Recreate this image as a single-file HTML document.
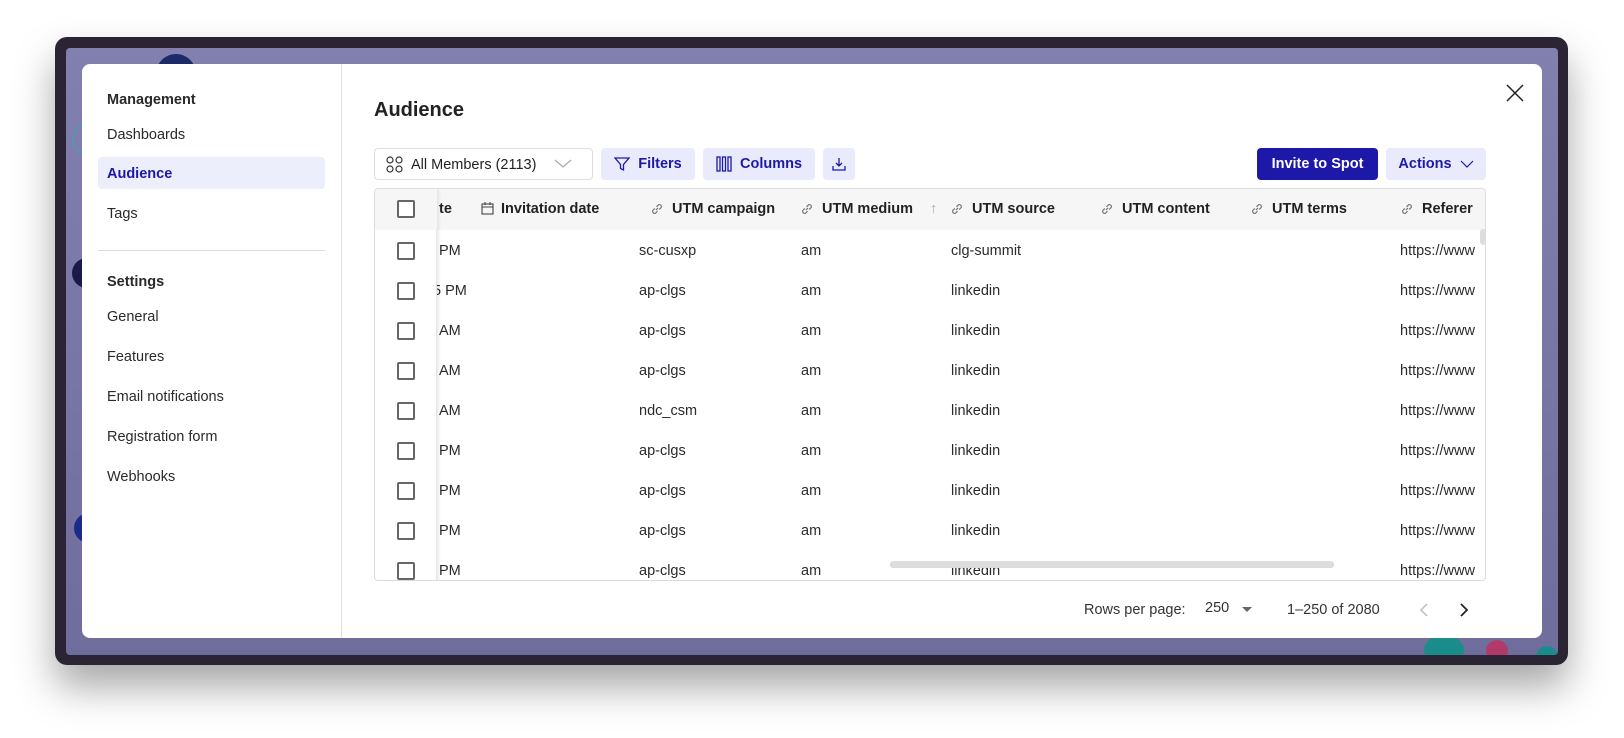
<!DOCTYPE html>
<html><head><meta charset="utf-8"><style>
*{box-sizing:border-box;margin:0;padding:0}
body{width:1624px;height:738px;background:#fff;position:relative;overflow:hidden;font-family:"Liberation Sans",sans-serif;color:#222;font-size:14.5px}
.frame{position:absolute;left:55px;top:37px;width:1513px;height:628px;background:#2b2433;border-radius:12px;box-shadow:0 22px 40px rgba(0,0,0,.35)}
.inner{position:absolute;left:66px;top:48px;width:1492px;height:607px;background:linear-gradient(#8180ae,#6f6d9c);border-radius:4px;overflow:hidden}
.modal{position:absolute;left:82px;top:64px;width:1460px;height:574px;background:#fff;border-radius:8px}
.a{position:absolute;white-space:nowrap}
.side{left:0;top:0;width:260px;height:574px;border-right:1px solid #e0e0e0}
.si{position:absolute;left:25px;font-size:14.5px;color:#2a2a2a;transform:translateY(-50%)}
.b{font-weight:bold}
.btn{position:absolute;top:84px;height:32px;border-radius:4px;background:#e9ebfc;color:#1d18a8;font-weight:bold;display:flex;align-items:center;justify-content:center;font-size:14.5px}
.table{position:absolute;left:292px;top:124px;width:1112px;height:393px;border:1px solid #dcdcdc;border-radius:4px;overflow:hidden}
.hdr{position:absolute;left:0;top:0;width:100%;height:41px;background:#f6f6f6}
.h{position:absolute;top:20px;transform:translateY(-50%);font-weight:bold;font-size:14.5px;white-space:nowrap}
.c{position:absolute;transform:translateY(-50%);white-space:nowrap;font-size:14.5px;color:#2a2a2a}
.cb{position:absolute;width:18px;height:18px;border:2px solid #666;border-radius:2px;background:#fff}
.sticky{position:absolute;left:0;top:0;width:62px;height:393px;background:#fff;box-shadow:2px 0 3px rgba(0,0,0,.08);border-right:1px solid #e6e6e6}
.ic{position:absolute;top:14px}
</style></head><body>
<div class="frame"></div>
<div class="inner">
 <div style="position:absolute;left:90px;top:6px;width:40px;height:40px;border-radius:50%;background:#1c2a6a"></div>
 <div style="position:absolute;left:6px;top:76px;width:30px;height:30px;border-radius:50%;border:1px solid #3aa"></div>
 <div style="position:absolute;left:6px;top:210px;width:30px;height:30px;border-radius:50%;background:#1a1a4a"></div>
 <div style="position:absolute;left:8px;top:465px;width:30px;height:30px;border-radius:50%;background:#1c2a8a"></div>
 <div style="position:absolute;left:1420px;top:592px;width:22px;height:22px;border-radius:50%;background:#b23a6a"></div>
 <div style="position:absolute;left:1470px;top:598px;width:22px;height:22px;border-radius:50%;background:#1b8c8c"></div>
 <div style="position:absolute;left:1358px;top:587px;width:40px;height:30px;border-radius:50%;background:#1b8c8c"></div>
</div>
<div class="modal">
 <div class="a side">
  <div class="si b" style="top:36px">Management</div>
  <div class="si" style="top:71px">Dashboards</div>
  <div style="position:absolute;left:16px;top:93px;width:227px;height:32px;background:#eceefc;border-radius:4px"></div>
  <div class="si b" style="top:110px;color:#1d18a8">Audience</div>
  <div class="si" style="top:150px">Tags</div>
  <div style="position:absolute;left:16px;top:186px;width:227px;height:1px;background:#dcdcdc"></div>
  <div class="si b" style="top:218px">Settings</div>
  <div class="si" style="top:253px">General</div>
  <div class="si" style="top:293px">Features</div>
  <div class="si" style="top:333px">Email notifications</div>
  <div class="si" style="top:373px">Registration form</div>
  <div class="si" style="top:413px">Webhooks</div>
 </div>
 <div class="a b" style="left:292px;top:35px;font-size:20px">Audience</div>
 <svg class="a" style="left:1424px;top:20px" width="18" height="18" viewBox="0 0 18 18"><path d="M1 1L17 17M17 1L1 17" stroke="#222" stroke-width="1.5"/></svg>
 <div style="position:absolute;left:292px;top:84px;width:219px;height:32px;border:1px solid #ddd;border-radius:4px"></div>
 <svg class="a" style="left:304px;top:92px" width="17" height="17" viewBox="0 0 17 17" fill="none" stroke="#333" stroke-width="1.2"><circle cx="4" cy="4" r="3"/><circle cx="13" cy="4" r="3"/><circle cx="4" cy="13" r="3"/><circle cx="13" cy="13" r="3"/></svg>
 <div class="a" style="left:329px;top:93px">All Members (2113)</div>
 <svg class="a" style="left:472px;top:95px" width="18" height="10" viewBox="0 0 18 10"><path d="M1 1L9 8L17 1" stroke="#aaa" fill="none" stroke-width="1.2"/></svg>
 <div class="btn" style="left:519px;width:94px"><svg width="16" height="16" viewBox="0 0 16 16" style="margin-right:8px"><path d="M1 2H15L9.5 8.5V14L6.5 12.5V8.5Z" fill="none" stroke="#1d18a8" stroke-width="1.3"/></svg>Filters</div>
 <div class="btn" style="left:621px;width:112px"><svg width="16" height="16" viewBox="0 0 16 16" style="margin-right:8px" fill="none" stroke="#1d18a8" stroke-width="1.3"><rect x="1" y="1" width="3" height="14"/><rect x="6.5" y="1" width="3" height="14"/><rect x="12" y="1" width="3" height="14"/></svg>Columns</div>
 <div class="btn" style="left:741px;width:32px"><svg width="14" height="14" viewBox="0 0 14 14" fill="none" stroke="#1d18a8" stroke-width="1.3"><path d="M7 1V9M4 6L7 9L10 6M1 9V13H13V9"/></svg></div>
 <div class="btn" style="left:1175px;width:121px;background:#1d18a8;color:#fff">Invite to Spot</div>
 <div class="btn" style="left:1304px;width:100px">Actions<svg width="14" height="8" viewBox="0 0 14 8" style="margin-left:8px"><path d="M1 1L7 7L13 1" stroke="#1d18a8" fill="none" stroke-width="1.2"/></svg></div>

 <div class="table">
  <div class="hdr"></div>
  <div class="h" style="left:64px">te</div>
  <svg class="ic" style="left:106px;top:13px" width="13" height="13" viewBox="0 0 13 13" fill="none" stroke="#444" stroke-width="1.1"><rect x="1" y="2" width="11" height="10"/><path d="M1 5H12M4 0V3M9 0V3"/></svg>
  <div class="h" style="left:126px">Invitation date</div>
  <div class="h" style="left:297px">UTM campaign</div>
  <div class="h" style="left:447px">UTM medium</div>
  <div class="h" style="left:555px;color:#aaa;font-weight:normal">↑</div>
  <div class="h" style="left:597px">UTM source</div>
  <div class="h" style="left:747px">UTM content</div>
  <div class="h" style="left:897px">UTM terms</div>
  <div class="h" style="left:1047px">Referer</div>
  <div id="links"></div>
  <div id="rows"></div>
  <div style="position:absolute;left:515px;top:372px;width:444px;height:7px;background:#ddd;border-radius:3px"></div>
  <div style="position:absolute;left:1105px;top:40px;width:6px;height:16px;background:#ddd;border-radius:3px"></div>
  <div class="sticky"><div style="position:absolute;left:0;top:0;width:62px;height:41px;background:#f6f6f6"></div><div id="cbs"></div></div>
 </div>
 <div class="a" style="left:1002px;top:538px;color:#333">Rows per page:</div>
 <div class="a" style="left:1123px;top:536px;color:#333">250</div>
 <svg class="a" style="left:1160px;top:543px" width="10" height="6"><path d="M0 0H10L5 5Z" fill="#666"/></svg>
 <div class="a" style="left:1205px;top:538px;color:#333">1–250 of 2080</div>
 <svg class="a" style="left:1338px;top:539px" width="8" height="14"><path d="M7 1L1 7L7 13" stroke="#bbb" fill="none" stroke-width="1.5"/></svg>
 <svg class="a" style="left:1378px;top:539px" width="8" height="14"><path d="M1 1L7 7L1 13" stroke="#222" fill="none" stroke-width="1.8"/></svg>
</div>
<script>
var times=["PM","5 PM","AM","AM","AM","PM","PM","PM","PM"],camp=["sc-cusxp","ap-clgs","ap-clgs","ap-clgs","ndc_csm","ap-clgs","ap-clgs","ap-clgs","ap-clgs"],src=["clg-summit","linkedin","linkedin","linkedin","linkedin","linkedin","linkedin","linkedin","linkedin"];
var r="",cb='<div class="cb" style="left:22px;top:11px"></div>';
for(var i=0;i<9;i++){var y=62+i*40;
r+='<div class="c" style="left:'+(i==1?58:64)+'px;top:'+y+'px">'+times[i]+'</div><div class="c" style="left:264px;top:'+y+'px">'+camp[i]+'</div><div class="c" style="left:426px;top:'+y+'px">am</div><div class="c" style="left:576px;top:'+y+'px">'+src[i]+'</div><div class="c" style="left:1025px;top:'+y+'px">https://www</div>';
cb+='<div class="cb" style="left:22px;top:'+(y-9)+'px"></div>';}
document.getElementById('rows').innerHTML=r;document.getElementById('cbs').innerHTML=cb;
var l="",xs=[275,425,575,725,875,1025];
xs.forEach(function(x){l+='<svg class="ic" style="left:'+x+'px;top:13px" width="14" height="14" viewBox="0 0 13 13" fill="none" stroke="#777" stroke-width="1.1"><path d="M5.5 7.5L7.5 5.5M4.5 6L2.5 8A2 2 0 0 0 5 10.5L7 8.5M8.5 7L10.5 5A2 2 0 0 0 8 2.5L6 4.5"/></svg>';});
document.getElementById('links').innerHTML=l;
</script>
</body></html>
